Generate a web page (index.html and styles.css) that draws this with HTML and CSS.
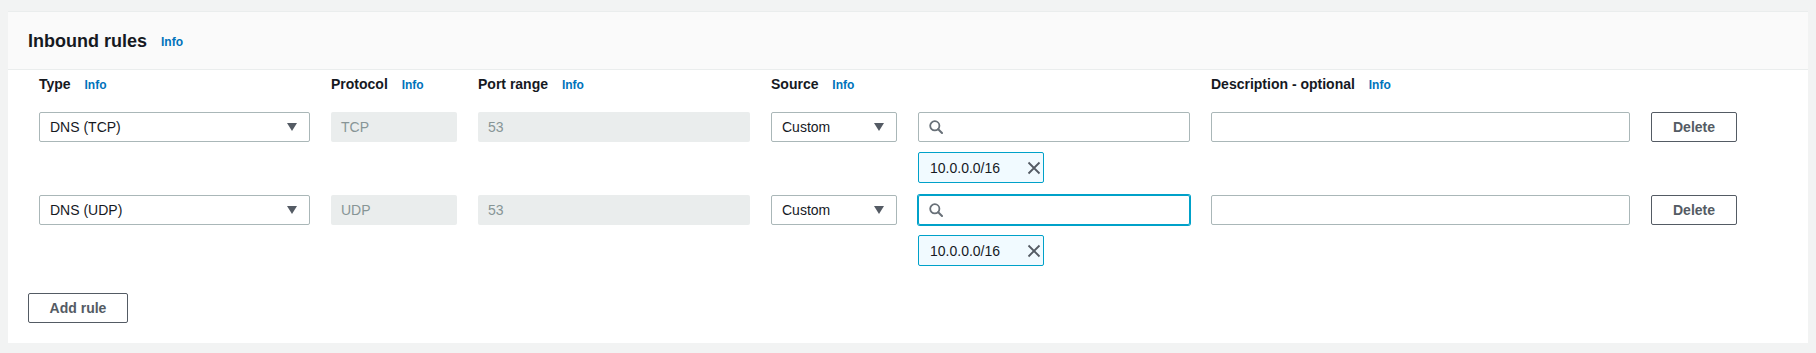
FILE: index.html
```html
<!DOCTYPE html>
<html>
<head>
<meta charset="utf-8">
<link rel="stylesheet" href="styles.css">
</head>
<body>
<div class="panel">
  <div class="panel-header">
    <h2 class="title">Inbound rules</h2>
    <a class="info info-title">Info</a>
  </div>
  <div class="panel-body">
    <div class="rules">
      <div class="grid labels">
        <div class="label">Type <a class="info">Info</a></div>
        <div class="label">Protocol <a class="info">Info</a></div>
        <div class="label">Port range <a class="info">Info</a></div>
        <div class="label span2">Source <a class="info">Info</a></div>
        <div class="label">Description - optional <a class="info">Info</a></div>
        <div></div>
      </div>

      <div class="grid rule">
        <div class="select"><span>DNS (TCP)</span><span class="caret"></span></div>
        <div class="disabled">TCP</div>
        <div class="disabled">53</div>
        <div class="select"><span>Custom</span><span class="caret"></span></div>
        <div class="search-cell">
          <div class="search">
            <svg class="search-icon" width="14" height="14" viewBox="0 0 14 14"><circle cx="5.8" cy="5.8" r="4.6" fill="none" stroke="#687078" stroke-width="1.8"/><line x1="9.2" y1="9.2" x2="13" y2="13" stroke="#687078" stroke-width="2" stroke-linecap="round"/></svg>
          </div>
          <div class="token"><span>10.0.0.0/16</span><svg class="close" width="14" height="14" viewBox="0 0 14 14"><path d="M1.5 1.5 L12.5 12.5 M12.5 1.5 L1.5 12.5" stroke="#545b64" stroke-width="1.8" fill="none"/></svg></div>
        </div>
        <div class="text-input"></div>
        <button class="btn">Delete</button>
      </div>

      <div class="grid rule">
        <div class="select"><span>DNS (UDP)</span><span class="caret"></span></div>
        <div class="disabled">UDP</div>
        <div class="disabled">53</div>
        <div class="select"><span>Custom</span><span class="caret"></span></div>
        <div class="search-cell">
          <div class="search focused">
            <svg class="search-icon" width="14" height="14" viewBox="0 0 14 14"><circle cx="5.8" cy="5.8" r="4.6" fill="none" stroke="#687078" stroke-width="1.8"/><line x1="9.2" y1="9.2" x2="13" y2="13" stroke="#687078" stroke-width="2" stroke-linecap="round"/></svg>
          </div>
          <div class="token"><span>10.0.0.0/16</span><svg class="close" width="14" height="14" viewBox="0 0 14 14"><path d="M1.5 1.5 L12.5 12.5 M12.5 1.5 L1.5 12.5" stroke="#545b64" stroke-width="1.8" fill="none"/></svg></div>
        </div>
        <div class="text-input"></div>
        <button class="btn">Delete</button>
      </div>
    </div>
    <button class="btn add">Add rule</button>
  </div>
</div>
</body>
</html>
```

FILE: styles.css
```css
html, body {
  background: #f2f3f3;
}
body {
  margin: 11px 8px 0;
  font-family: "Liberation Sans", Arial, sans-serif;
  font-size: 14px;
  color: #16191f;
}
.panel {
  background: #fff;
  border-top: 1px solid #eaeded;
  box-shadow: 0 1px 1px 0 rgba(0, 28, 36, 0.3), 1px 1px 1px 0 rgba(0, 28, 36, 0.15), -1px 1px 1px 0 rgba(0, 28, 36, 0.15);
}
.panel-header {
  height: 57px;
  background: #fafafa;
  border-bottom: 1px solid #eaeded;
  padding: 0 20px;
  display: flex;
  align-items: center;
}
.title {
  margin: 0;
  font-size: 18px;
  font-weight: 700;
  line-height: 22px;
  color: #16191f;
}
.info {
  color: #0073bb;
  font-size: 12px;
  font-weight: 700;
  margin-left: 10px;
}
.info-title {
  margin-left: 14px;
  margin-top: 3px;
}
.panel-body {
  padding: 4px 20px 20px;
}
.rules {
  padding-left: 11px;
}
.grid {
  display: grid;
  grid-template-columns: 271px 126px 272px 126px 272px 419px 86px;
  column-gap: 21px;
  align-items: start;
}
.labels {
  margin-bottom: 17px;
}
.label {
  font-weight: 700;
  line-height: 20px;
  white-space: nowrap;
}
.span2 {
  grid-column: span 2;
}
.rule {
  margin-bottom: 12px;
}
.rule:last-child {
  margin-bottom: 27px;
}
.select, .text-input, .search, .disabled {
  box-sizing: border-box;
  height: 30px;
  border-radius: 2px;
  display: flex;
  align-items: center;
}
.select {
  border: 1px solid #aab7b8;
  padding: 0 12px 0 10px;
  justify-content: space-between;
}
.caret {
  width: 0;
  height: 0;
  border-left: 5px solid transparent;
  border-right: 5px solid transparent;
  border-top: 8px solid #545b64;
}
.disabled {
  background: #eaeded;
  color: #879596;
  padding: 0 10px;
}
.text-input {
  border: 1px solid #aab7b8;
}
.search {
  border: 1px solid #aab7b8;
  padding-left: 10px;
}
.search.focused {
  border-color: #00a1c9;
  box-shadow: 0 0 0 1px #00a1c9;
}
.search-icon {
  display: block;
}
.token {
  box-sizing: border-box;
  margin-top: 10px;
  width: 126px;
  height: 31px;
  background: #f1faff;
  border: 1px solid #00a1c9;
  border-radius: 2px;
  display: flex;
  align-items: center;
  justify-content: space-between;
  padding: 0 2px 0 11px;
}
.close {
  display: block;
}
.btn {
  box-sizing: border-box;
  height: 30px;
  background: #fff;
  border: 1px solid #545b64;
  border-radius: 2px;
  color: #545b64;
  font-family: "Liberation Sans", Arial, sans-serif;
  font-size: 14px;
  font-weight: 700;
  padding: 0;
  width: 86px;
}
.add {
  width: 100px;
}
```
